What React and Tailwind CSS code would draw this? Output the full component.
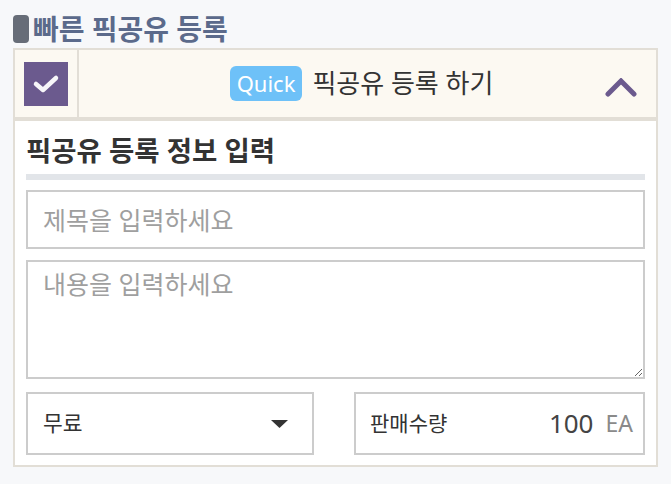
import React from 'react';

const FONT = { fontFamily: '"Noto Sans", "Noto Sans CJK KR", sans-serif' };

const QuickRegister = () => {
  return (
    <div className="min-h-screen bg-[#f7f8fa] px-[13px] pt-[9px]" style={FONT}>
      {/* Section title */}
      <h2 className="flex items-center gap-[4px] h-[39px] text-[28px] font-bold text-[#5b6a8b] leading-none">
        <span className="w-4 h-7 rounded-[4px] bg-[#676d78]" />
        빠른 픽공유 등록
      </h2>

      <div className="border-2 border-[#e2ded6]">
        {/* Header */}
        <div className="flex h-[71px] bg-[#fcf9f2] border-b-[4px] border-[#e2ded6]">
          <div className="w-[64px] flex items-center justify-center border-r-2 border-[#e2ded6]">
            <div className="w-11 h-11 bg-[#6b5a8e] flex items-center justify-center">
              <svg width="44" height="44" viewBox="0 0 44 44">
                <path d="M12 22 L19 28 L32 16" fill="none" stroke="#fff" strokeWidth="4.5" strokeLinecap="round" strokeLinejoin="round" opacity="0.95" />
              </svg>
            </div>
          </div>
          <div className="relative flex-1 flex items-center justify-center gap-[10px] pr-[12px]">
            <span className="h-[35px] px-[7px] rounded-md bg-[#6ec1f8] text-white text-[22px] flex items-center">Quick</span>
            <span className="text-[26px] text-[#333]">픽공유 등록 하기</span>
            <svg className="absolute right-[19px] top-[28px]" width="32" height="20" viewBox="0 0 32 20">
              <path d="M3 16 L16 3 L29 16" fill="none" stroke="#6b5a8e" strokeWidth="5" strokeLinecap="round" strokeLinejoin="miter" />
            </svg>
          </div>
        </div>

        {/* Body */}
        <div className="bg-white px-[11px] pt-[12px] pb-[10px]">
          <h3 className="text-[27.5px] font-bold text-[#333] leading-[36px]">픽공유 등록 정보 입력</h3>
          <div className="h-[6px] bg-[#e2e5e9] mt-[5px]" />

          <input
            className="mt-[10px] w-full h-[59px] border-2 border-[#cccccc] px-[15px] text-[25px] text-[#333] placeholder:text-[#9f9f9f] outline-none"
            placeholder="제목을 입력하세요"
          />
          <textarea
            className="mt-[11px] block w-full h-[119px] border-2 border-[#cccccc] px-[15px] pt-[4px] text-[25px] text-[#333] placeholder:text-[#9f9f9f] outline-none"
            placeholder="내용을 입력하세요"
          />

          <div className="mt-[13px] flex gap-[40px]">
            <div className="w-[288px] h-[63px] border-2 border-[#cccccc] flex items-center justify-between pl-[15px] pr-[24px]">
              <span className="text-[21.5px] text-[#333]">무료</span>
              <svg width="17" height="8" viewBox="0 0 17 8">
                <polygon points="0,0 17,0 8.5,8" fill="#333" />
              </svg>
            </div>
            <div className="flex-1 h-[63px] border-2 border-[#cccccc] flex items-center pl-[14px] pr-[10px]">
              <span className="text-[21px] text-[#333]">판매수량</span>
              <span className="ml-auto text-[26px] text-[#444]">100</span>
              <span className="ml-[12px] text-[23px] text-[#8a8a8a]">EA</span>
            </div>
          </div>
        </div>
      </div>
    </div>
  );
};

export default function App() {
  return <QuickRegister />;
}
